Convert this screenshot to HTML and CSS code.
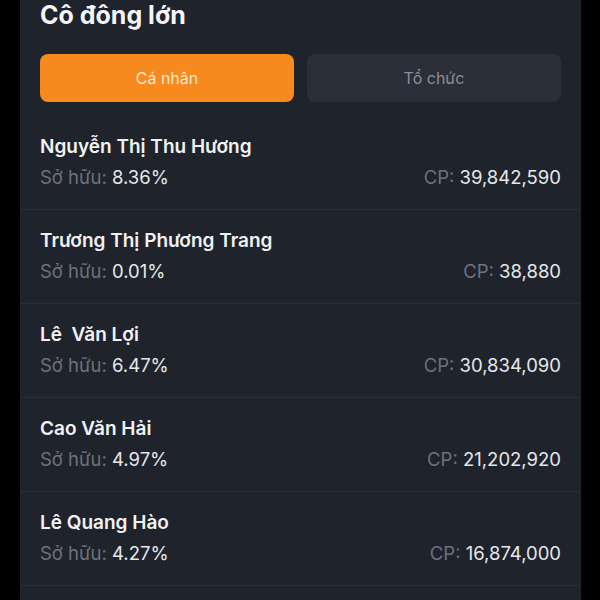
FILE: index.html
```html
<!DOCTYPE html>
<html lang="vi">
<head>
    <meta charset="UTF-8">
    <meta name="viewport" content="width=device-width, initial-scale=1.0">
    <title>Cổ đông lớn</title>
    <link rel="stylesheet" href="styles.css">
</head>
<body>
    <div class="panel">
        <h1 class="title">Cô đông lớn</h1>

        <div class="tabs">
            <button class="tab active">Cá nhân</button>
            <button class="tab">Tổ chức</button>
        </div>

        <div class="list">
            <div class="row">
                <div class="name">Nguyễn Thị Thu Hương</div>
                <div class="info">
                    <span><span class="label">Sở hữu:</span> 8.36%</span>
                    <span><span class="label">CP:</span> 39,842,590</span>
                </div>
            </div>
            <div class="row">
                <div class="name">Trương Thị Phương Trang</div>
                <div class="info">
                    <span><span class="label">Sở hữu:</span> 0.01%</span>
                    <span><span class="label">CP:</span> 38,880</span>
                </div>
            </div>
            <div class="row">
                <div class="name">Lê&nbsp; Văn Lợi</div>
                <div class="info">
                    <span><span class="label">Sở hữu:</span> 6.47%</span>
                    <span><span class="label">CP:</span> 30,834,090</span>
                </div>
            </div>
            <div class="row">
                <div class="name">Cao Văn Hải</div>
                <div class="info">
                    <span><span class="label">Sở hữu:</span> 4.97%</span>
                    <span><span class="label">CP:</span> 21,202,920</span>
                </div>
            </div>
            <div class="row">
                <div class="name">Lê Quang Hào</div>
                <div class="info">
                    <span><span class="label">Sở hữu:</span> 4.27%</span>
                    <span><span class="label">CP:</span> 16,874,000</span>
                </div>
            </div>
            <div class="row">
                <div class="name">&nbsp;</div>
            </div>
        </div>
    </div>
</body>
</html>
```

FILE: styles.css
```css
body {
    margin: 0;
    background-color: #000;
    font-family: Inter, "Noto Sans", sans-serif;
    color: #f1f2f4;
}

.panel {
    margin: 0 19px 0 20px;
    height: 600px;
    overflow: hidden;
    background-color: #1f232c;
}

.title {
    margin: 0;
    padding: 0 20px;
    font-size: 25px;
    line-height: 30px;
    font-weight: 700;
    color: #f4f5f7;
}

.tabs {
    display: flex;
    gap: 13px;
    padding: 0 20px;
    margin-top: 24px;
}

.tab {
    flex: 1;
    height: 48px;
    border: none;
    border-radius: 8px;
    background-color: #2b2f39;
    color: #8b8e96;
    font-family: inherit;
    font-size: 16px;
}

.tab.active {
    background-color: #f68a1f;
    color: #fde6cc;
}

.list {
    margin-top: 14px;
}

.row {
    padding: 20px 20px 21px;
    border-bottom: 1px solid #2a2e38;
}

.name {
    font-size: 19px;
    line-height: 22px;
    font-weight: 600;
    color: #f1f2f4;
}

.info {
    display: flex;
    justify-content: space-between;
    margin-top: 8px;
    font-size: 18.5px;
    line-height: 22px;
    color: #e6e7ea;
}

.label {
    color: #6e727b;
}
```
